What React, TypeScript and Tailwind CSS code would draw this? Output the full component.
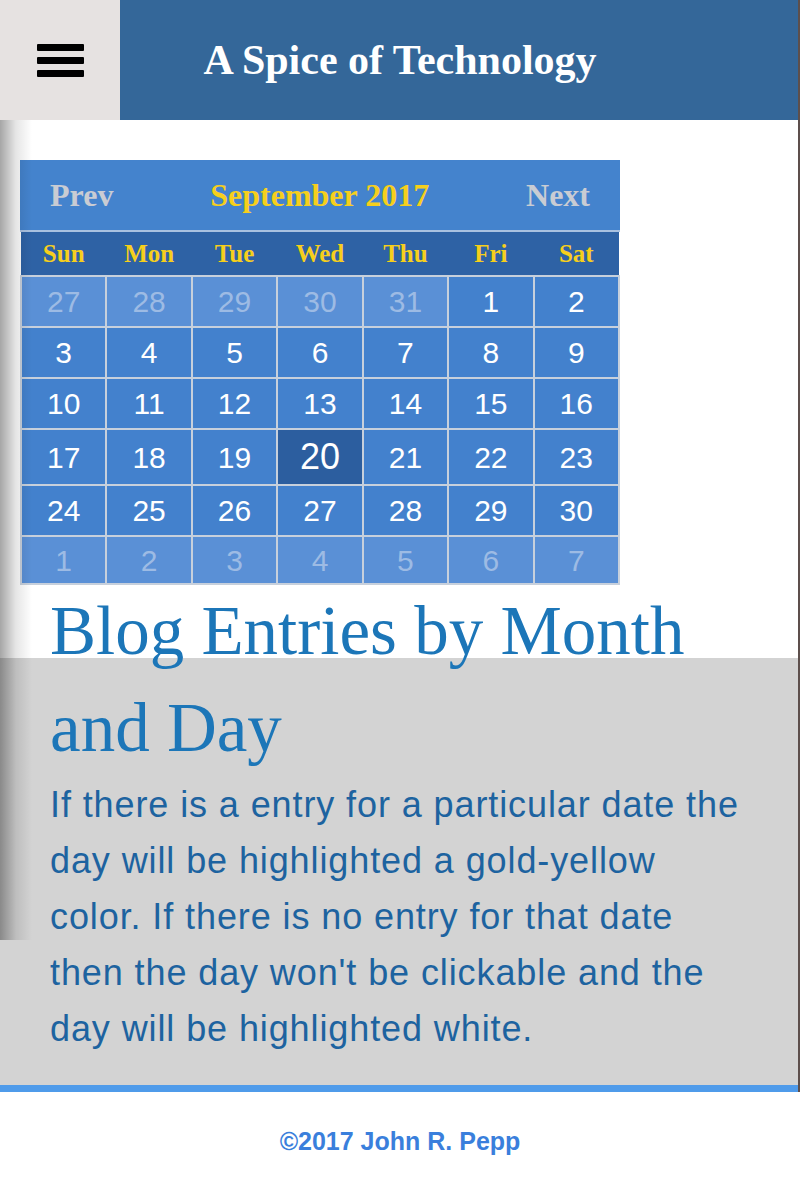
import React from 'react';

type Day = { n: number; muted?: boolean; today?: boolean };

const weekdays = ['Sun', 'Mon', 'Tue', 'Wed', 'Thu', 'Fri', 'Sat'];

const buildWeeks = (): Day[][] => {
  const days: Day[] = [];
  [27, 28, 29, 30, 31].forEach((n) => days.push({ n, muted: true }));
  for (let n = 1; n <= 30; n++) days.push({ n, today: n === 20 });
  for (let n = 1; n <= 7; n++) days.push({ n, muted: true });
  const weeks: Day[][] = [];
  for (let i = 0; i < days.length; i += 7) weeks.push(days.slice(i, i + 7));
  return weeks;
};

const Calendar: React.FC = () => {
  const weeks = buildWeeks();
  return (
    <div className="w-[600px] ml-[20px]">
      <div className="flex items-center justify-between h-[72px] px-[30px] bg-[#4483cd] border-b-2 border-[#a9c1e0] font-['Liberation_Serif',serif] font-bold text-[32px]">
        <span className="text-[#c9ccd3]">Prev</span>
        <span className="text-[#f6cf1c]">September 2017</span>
        <span className="text-[#c9ccd3]">Next</span>
      </div>
      <table className="w-full table-fixed border-collapse">
        <thead>
          <tr className="bg-[#2e62a5] h-[44px]">
            {weekdays.map((d) => (
              <th key={d} className="font-['Liberation_Serif',serif] font-bold text-[25px] text-[#f6cf1c] p-0">
                {d}
              </th>
            ))}
          </tr>
        </thead>
        <tbody>
          {weeks.map((week, wi) => (
            <tr key={wi} className={wi === 5 ? 'h-[48px]' : 'h-[51px]'}>
              {week.map((day, di) => (
                <td
                  key={di}
                  className={
                    "border-2 border-[#c7d0dc] text-center p-0 font-['Liberation_Sans',Arial,sans-serif] " +
                    (day.today
                      ? 'bg-[#2c5e9f] text-white text-[36px]'
                      : day.muted
                        ? 'bg-[#5a90d6] text-[#9dbbe4] text-[30px]'
                        : 'bg-[#4381cd] text-white text-[30px]')
                  }
                >
                  {day.n}
                </td>
              ))}
            </tr>
          ))}
        </tbody>
      </table>
    </div>
  );
};

export default function App() {
  return (
    <div className="relative w-[800px] min-h-[1185px] bg-white overflow-hidden">
      <header className="flex h-[120px] bg-[#346799]">
        <div className="w-[120px] h-full bg-[#e6e2e1] flex flex-col justify-center items-center gap-[6px]">
          <span className="block w-[47px] h-[7px] bg-black rounded-[1px]" />
          <span className="block w-[47px] h-[7px] bg-black rounded-[1px]" />
          <span className="block w-[47px] h-[7px] bg-black rounded-[1px]" />
        </div>
        <div className="flex-1 flex items-center justify-center pr-[120px]">
          <h1 className="font-['Liberation_Serif',serif] font-bold text-[42px] text-white">A Spice of Technology</h1>
        </div>
      </header>

      <main className="pt-[40px] flex flex-col">
        <Calendar />
        <section className="mt-[73px] flex flex-col bg-[#d3d3d3] w-[798px] pl-[50px] pr-[45px] pb-[28px]">
          <h2 className="-mt-[75px] font-['Liberation_Serif',serif] text-[69px] leading-[97px] text-[#1c76b8]">
            Blog Entries by Month and Day
          </h2>
          <p className="font-['Liberation_Sans',Arial,sans-serif] text-[36px] leading-[56px] tracking-[0.9px] text-[#1d63a0]">
            If there is a entry for a particular date the day will be highlighted a gold-yellow color. If there is no
            entry for that date then the day won't be clickable and the day will be highlighted white.
          </p>
        </section>
        <div className="h-[7px] w-[798px] bg-[#4f9bea]" />
      </main>

      <footer className="h-[93px] flex items-center justify-center pt-[6px]">
        <p className="font-['Liberation_Sans',Arial,sans-serif] font-bold text-[25px] text-[#3a7fdc]">
          ©2017 John R. Pepp
        </p>
      </footer>

      <div className="absolute left-0 top-[120px] h-[820px] w-[32px] bg-linear-to-r from-black/35 via-black/10 to-transparent pointer-events-none" />
      <div className="absolute right-0 top-0 h-[1092px] w-[2px] bg-[#5d4f4c]" />
    </div>
  );
}
